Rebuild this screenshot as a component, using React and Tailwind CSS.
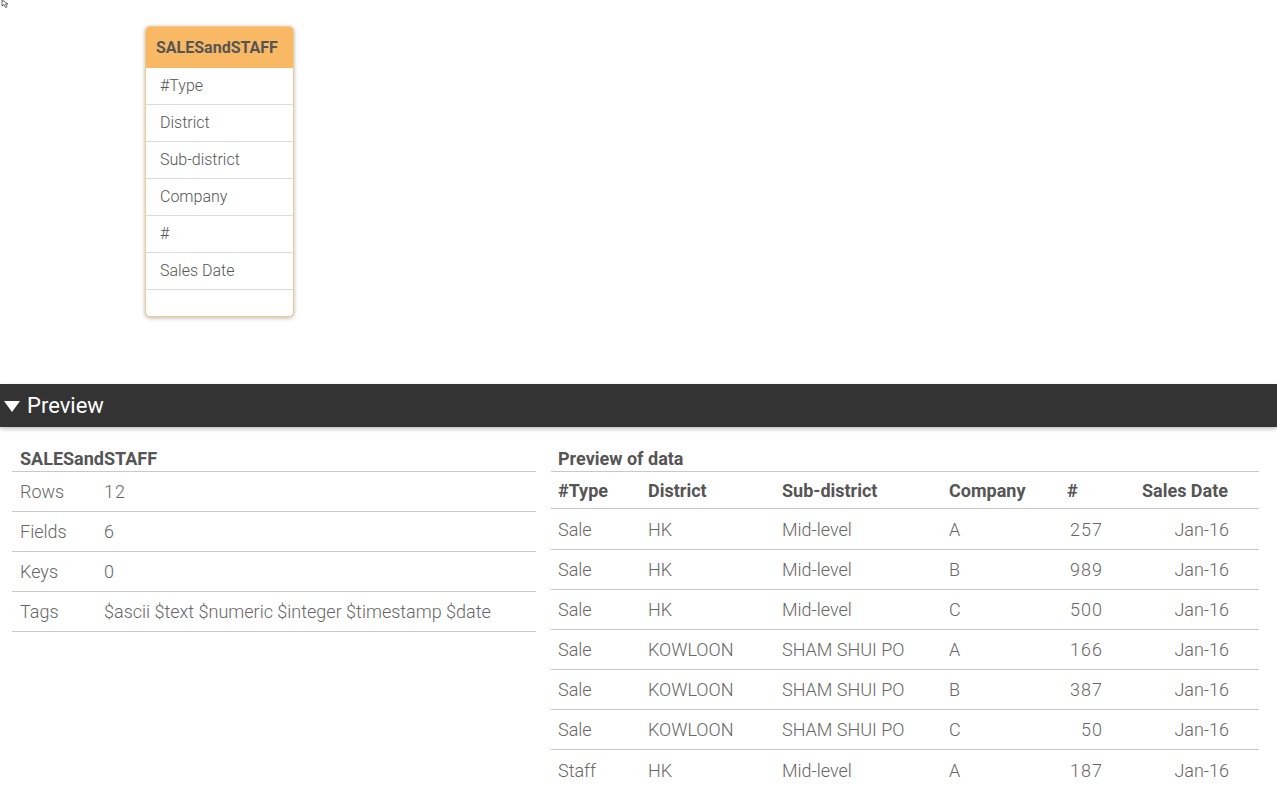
import React from 'react'

const fields = ['#Type', 'District', 'Sub-district', 'Company', '#', 'Sales Date']

const rows = [
  ['Sale', 'HK', 'Mid-level', 'A', '257', 'Jan-16'],
  ['Sale', 'HK', 'Mid-level', 'B', '989', 'Jan-16'],
  ['Sale', 'HK', 'Mid-level', 'C', '500', 'Jan-16'],
  ['Sale', 'KOWLOON', 'SHAM SHUI PO', 'A', '166', 'Jan-16'],
  ['Sale', 'KOWLOON', 'SHAM SHUI PO', 'B', '387', 'Jan-16'],
  ['Sale', 'KOWLOON', 'SHAM SHUI PO', 'C', '50', 'Jan-16'],
  ['Staff', 'HK', 'Mid-level', 'A', '187', 'Jan-16'],
]

const meta = [
  ['Rows', '12', true],
  ['Fields', '6', true],
  ['Keys', '0', true],
  ['Tags', '$ascii $text $numeric $integer $timestamp $date', false],
]

const cols = 'grid grid-cols-[90px_134px_167px_118px_50px_127px_1fr]'
const mono = 'tabular-nums tracking-[1px] font-light text-[18px]'

export default function App() {
  return (
    <div className="h-[804px] w-[1277px] overflow-hidden bg-white font-['Roboto',sans-serif] text-[#595959]">
      {/* model canvas */}
      <div className="relative h-[384px]">
        <svg className="absolute left-0 top-0" width="12" height="8" viewBox="0 0 12 8">
          <path d="M2 0 L2 6 L4 4.5 L5.5 7.5 L7 6.8 L5.6 4 L8 4 Z" fill="white" stroke="#444" strokeWidth="0.8" />
        </svg>

        <div className="absolute left-[145px] top-[26px] w-[149px] overflow-hidden rounded-[5px] border border-[#f5c987] bg-white shadow-[0_1px_4px_rgba(0,0,0,0.3)]">
          <div className="flex h-[41px] items-center bg-[#f9b864] px-[10px] text-[16px] font-bold text-[#555]">
            SALESandSTAFF
          </div>
          {fields.map((f) => (
            <div key={f} className="flex h-[37px] items-center border-b border-[#dcdcdc] px-[14px] text-[16px] font-light text-[#555]">
              {f}
            </div>
          ))}
          <div className="h-[26px]" />
        </div>
      </div>

      {/* preview bar */}
      <div className="relative z-10 flex h-[43px] items-center gap-[7px] bg-[#333] pl-[4px] text-[22px] text-white shadow-[0_2px_4px_rgba(0,0,0,0.25)]">
        <svg width="16" height="12" viewBox="0 0 16 12">
          <path d="M0 1 L16 1 L8 12 Z" fill="white" />
        </svg>
        <span>Preview</span>
      </div>

      <div className="flex gap-[15px] pl-[12px] pt-[20px]">
        {/* table info */}
        <div className="w-[524px]">
          <div className="border-b border-[#c8c8c8] px-[8px] pb-[1px] text-[18px] font-bold leading-[23px] text-[#555]">
            SALESandSTAFF
          </div>
          {meta.map(([k, v, isNum]) => (
            <div key={k} className="flex h-[40px] items-center border-b border-[#c8c8c8] px-[8px] text-[18px] font-light text-[#666]">
              <span className="w-[84px]">{k}</span>
              <span className={isNum ? mono : ''}>{v}</span>
            </div>
          ))}
        </div>

        {/* data preview */}
        <div className="w-[708px]">
          <div className="border-b border-[#c8c8c8] px-[7px] pb-[1px] text-[18px] font-bold leading-[23px] text-[#555]">
            Preview of data
          </div>
          <div className={`${cols} h-[37px] items-center border-b border-[#c8c8c8] text-[18px] font-bold text-[#555]`}>
            {fields.map((f, i) => (
              <div key={f} className={i === 5 ? 'pr-[9px] text-right' : 'pl-[7px]'}>
                {f}
              </div>
            ))}
            <div />
          </div>
          {rows.map((r, ri) => (
            <div
              key={ri}
              className={`${cols} ${ri === 0 ? 'h-[41px]' : 'h-[40px]'} items-center text-[18px] font-light text-[#666] ${ri < rows.length - 1 ? 'border-b border-[#c8c8c8]' : ''}`}
            >
              {r.map((c, i) => (
                <div
                  key={i}
                  className={i === 4 ? `${mono} pr-[7px] text-right` : i === 5 ? 'pr-[8px] text-right' : 'pl-[7px]'}
                >
                  {c}
                </div>
              ))}
              <div />
            </div>
          ))}
        </div>
      </div>
    </div>
  )
}
